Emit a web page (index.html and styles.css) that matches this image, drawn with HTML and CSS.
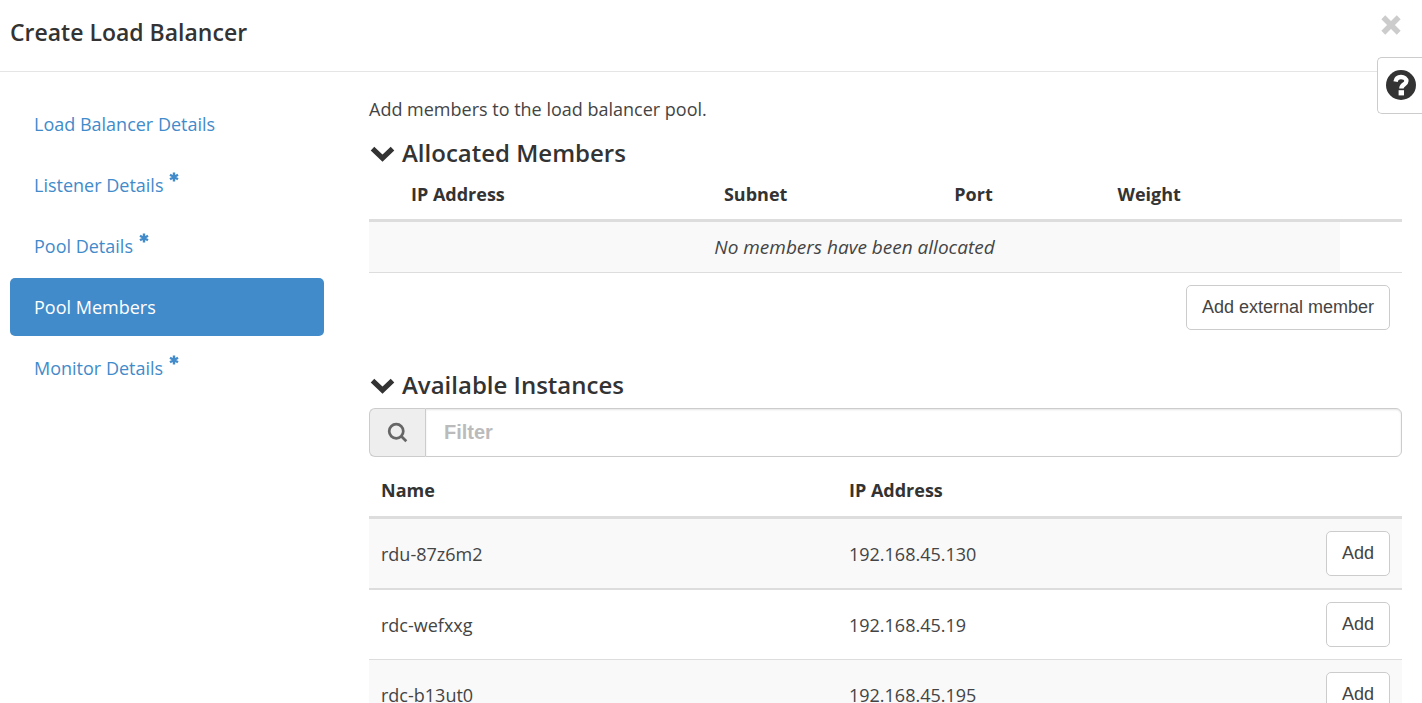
FILE: index.html
```html
<!DOCTYPE html>
<html lang="en">
<head>
<meta charset="utf-8">
<title>Create Load Balancer</title>
<meta name="viewport" content="width=device-width, initial-scale=1">
<link rel="stylesheet" href="styles.css">
</head>
<body>
<div class="wizard">
  <header class="wizard-header">
    <h1 class="wizard-title">Create Load Balancer</h1>
    <button class="close" type="button" aria-label="Close">
      <svg class="close-icon" viewBox="0 0 20 20" aria-hidden="true"><path d="M3 3 17 17M17 3 3 17"/></svg>
    </button>
  </header>
  <button class="help" type="button" aria-label="Help">
    <svg class="help-icon" viewBox="0 0 30 30" aria-hidden="true">
      <circle cx="15" cy="15" r="15"/>
      <path class="help-hook" d="M9.6 11.6C10 8.6 12.2 7 15 7C18.2 7 20.4 8.7 20.4 11.1C20.4 14.6 15.4 14.3 15.4 18.6"/>
      <path class="help-dot" d="M12.6 20.2h5.4v5.2h-5.4z"/>
    </svg>
  </button>
  <div class="wizard-body">
    <nav class="steps" aria-label="Steps">
      <a class="step" href="#details">Load Balancer Details</a>
      <a class="step" href="#listener">Listener Details<svg class="required" viewBox="0 0 10 10" aria-label="required"><path d="M5 0.5v9M1 2.8l8 4.4M9 2.8L1 7.2"/></svg></a>
      <a class="step" href="#pool">Pool Details<svg class="required" viewBox="0 0 10 10" aria-label="required"><path d="M5 0.5v9M1 2.8l8 4.4M9 2.8L1 7.2"/></svg></a>
      <a class="step step-active" href="#members" aria-current="step">Pool Members</a>
      <a class="step" href="#monitor">Monitor Details<svg class="required" viewBox="0 0 10 10" aria-label="required"><path d="M5 0.5v9M1 2.8l8 4.4M9 2.8L1 7.2"/></svg></a>
    </nav>
    <main class="content">
      <p class="intro">Add members to the load balancer pool.</p>
      <section class="allocated">
        <h2 class="section-title"><svg class="chevron" viewBox="0 0 24 16" aria-hidden="true"><path d="M2.4 3.4 12 12.4 21.6 3.4"/></svg>Allocated Members</h2>
        <table class="table">
          <colgroup><col class="col-expand"><col class="col-address"><col class="col-subnet"><col class="col-port"><col class="col-weight"><col class="col-remove"></colgroup>
          <thead>
            <tr><th></th><th>IP Address</th><th>Subnet</th><th>Port</th><th>Weight</th><th></th></tr>
          </thead>
          <tbody>
            <tr class="empty-row"><td class="empty" colspan="5">No members have been allocated</td><td></td></tr>
          </tbody>
        </table>
        <div class="table-actions"><button class="btn" type="button">Add external member</button></div>
      </section>
      <section class="available">
        <h2 class="section-title"><svg class="chevron" viewBox="0 0 24 16" aria-hidden="true"><path d="M2.4 3.4 12 12.4 21.6 3.4"/></svg>Available Instances</h2>
        <div class="filter">
          <label class="filter-addon" for="filter" aria-label="Filter">
            <svg class="search-icon" viewBox="0 0 20 20" aria-hidden="true"><circle cx="8.8" cy="8.8" r="6.7"/><path d="M13.6 13.6 18.4 18.4"/></svg>
          </label>
          <input class="filter-input" id="filter" type="text" placeholder="Filter">
        </div>
        <table class="table instances">
          <colgroup><col class="col-name"><col class="col-ip"><col class="col-add"></colgroup>
          <thead>
            <tr><th>Name</th><th>IP Address</th><th></th></tr>
          </thead>
          <tbody>
            <tr class="striped first"><td>rdu-87z6m2</td><td>192.168.45.130</td><td class="action"><button class="btn" type="button">Add</button></td></tr>
            <tr><td>rdc-wefxxg</td><td>192.168.45.19</td><td class="action"><button class="btn" type="button">Add</button></td></tr>
            <tr class="striped"><td>rdc-b13ut0</td><td>192.168.45.195</td><td class="action"><button class="btn" type="button">Add</button></td></tr>
          </tbody>
        </table>
      </section>
    </main>
  </div>
</div>
</body>
</html>
```
FILE: styles.css
```css
* { box-sizing: border-box; }

body {
  margin: 0;
  background: #fff;
  color: #444;
  font-family: "Segoe UI", "Open Sans", "Noto Sans", sans-serif;
  font-size: 18px;
  line-height: 26px;
}

.wizard {
  position: relative;
  height: 100vh;
  overflow: hidden;
}

.wizard-header {
  display: flex;
  justify-content: space-between;
  align-items: flex-start;
  height: 72px;
  padding: 14px 20px 0 10px;
  border-bottom: 1px solid #e5e5e5;
}

.wizard-title {
  margin: 0;
  color: #333;
  font-size: 23px;
  font-weight: 600;
  line-height: 36px;
}

.close {
  display: flex;
  padding: 0;
  border: 0;
  background: none;
}

.close-icon {
  width: 22px;
  height: 22px;
  fill: none;
  stroke: #ccc;
  stroke-width: 5;
}

.help {
  position: absolute;
  top: 57px;
  right: 0;
  display: flex;
  padding: 12px 6px 13px 8px;
  border: 1px solid #ccc;
  border-right: 0;
  border-radius: 5px 0 0 5px;
  background: #fff;
}

.help-icon {
  width: 30px;
  height: 30px;
  fill: #333;
}

.help-hook {
  fill: none;
  stroke: #fff;
  stroke-width: 4.4;
}

.help-dot { fill: #fff; }

.wizard-body {
  display: grid;
  grid-template-columns: 314fr 1033fr;
  column-gap: 45px;
  padding: 23px 20px 0 10px;
}

.steps {
  display: flex;
  flex-direction: column;
  gap: 3px;
}

.step {
  display: flex;
  align-items: center;
  gap: 6px;
  height: 58px;
  padding: 0 24px;
  border-radius: 5px;
  color: #428bca;
  text-decoration: none;
}

.step-active {
  background: #428bca;
  color: #fff;
}

.required {
  width: 10px;
  height: 10px;
  margin-bottom: 16px;
  fill: none;
  stroke: #428bca;
  stroke-width: 2.4;
}

.intro {
  margin: 0;
  padding: 1px 0 15px;
}

.section-title {
  display: flex;
  align-items: center;
  gap: 7px;
  margin: 0;
  padding-left: 1px;
  color: #333;
  font-size: 24px;
  font-weight: 600;
  line-height: 32px;
}

.chevron {
  width: 25px;
  height: 17px;
  fill: none;
  stroke: #333;
  stroke-width: 5;
}

.table {
  width: 100%;
  border-collapse: separate;
  border-spacing: 0;
  table-layout: fixed;
}

.table th {
  height: 53px;
  padding: 12px;
  border-bottom: 3px solid #ddd;
  color: #333;
  font-weight: 700;
  text-align: left;
}

.table td { padding: 12px; }

.col-expand { width: 2.9%; }
.col-address { width: 30.3%; }
.col-subnet { width: 22.3%; }
.col-port { width: 15.8%; }
.col-weight { width: 22.7%; }
.col-remove { width: 6%; }
.col-name { width: 45.3%; }
.col-ip { width: 44.7%; }
.col-add { width: 10%; }

.empty-row td { border-bottom: 1px solid #ddd; }

.table .empty {
  background: #f9f9f9;
  font-size: 19px;
  font-style: italic;
  text-align: center;
}

.table-actions {
  display: flex;
  justify-content: flex-end;
  padding: 12px;
}

.btn {
  height: 45px;
  padding: 0 15px;
  border: 1px solid #ccc;
  border-radius: 5px;
  background: #fff;
  color: #444;
  font-family: "Liberation Sans", Arial, sans-serif;
  font-size: 18px;
}

.available { margin-top: 27px; }

.filter {
  display: flex;
  height: 49px;
  margin-top: 7px;
}

.filter-addon {
  display: flex;
  align-items: center;
  justify-content: center;
  width: 56px;
  border: 1px solid #ccc;
  border-right: 0;
  border-radius: 6px 0 0 6px;
  background: #eee;
}

.search-icon {
  width: 21px;
  height: 21px;
  fill: none;
  stroke: #666;
  stroke-width: 2.6;
}

.filter-input {
  flex: 1;
  min-width: 0;
  padding: 0 18px;
  border: 1px solid #ccc;
  border-radius: 0 6px 6px 0;
  box-shadow: inset 0 1px 2px #e5e5e5;
  color: #444;
  font-family: "Liberation Sans", Arial, sans-serif;
  font-size: 20px;
  font-weight: 700;
}

.filter-input::placeholder { color: #bbb; }

.instances { margin-top: 6px; }
.instances th { height: 56px; }

.instances td { border-bottom: 1px solid #ddd; }
.instances .first td { border-bottom-width: 2px; }
.striped { background: #f9f9f9; }

.action { text-align: right; }
.action .btn { display: inline-block; vertical-align: top; }
```
